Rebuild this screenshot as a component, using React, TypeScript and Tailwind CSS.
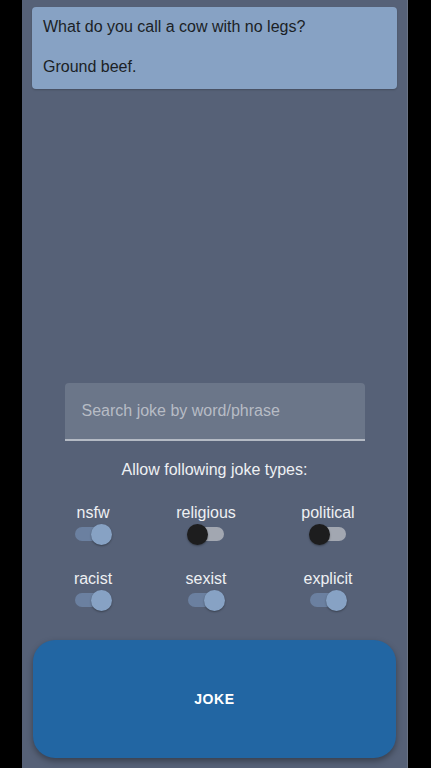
import React from "react";

function Toggle({ on }: { on: boolean }) {
  return (
    <div className="relative h-[20px] w-[38px] flex items-center">
      <div
        className={
          on
            ? "h-[14px] w-[36px] ml-[1px] rounded-full bg-[#6b80a0]"
            : "h-[14px] w-[36px] ml-[1px] rounded-full bg-[#a2a7b1]"
        }
      />
      <div
        className={
          on
            ? "absolute right-0 top-0 h-[21px] w-[21px] rounded-full bg-[#87a2c4] shadow-[0_1px_2px_rgba(0,0,0,0.35)]"
            : "absolute left-0 top-0 h-[21px] w-[21px] rounded-full bg-[#1d1d1e] shadow-[0_1px_2px_rgba(0,0,0,0.35)]"
        }
      />
    </div>
  );
}

function Cell({ label, on, w }: { label: string; on: boolean; w: string }) {
  return (
    <div className={"flex flex-col items-center " + w}>
      <div className="text-[16px] leading-[20px] text-[#eef0f3]">{label}</div>
      <div className="mt-[1px]">
        <Toggle on={on} />
      </div>
    </div>
  );
}

export default function App() {
  return (
    <div
      className="flex h-[768px] w-[431px] bg-black"
      style={{ fontFamily: '"Liberation Sans", Arial, sans-serif' }}
    >
      <div className="ml-[22px] flex h-full w-[386px] flex-col border-r border-[#6a7384] bg-[#566177]">
        <div className="mx-[10px] mt-[7px] rounded-[4px] bg-[#87a2c4] px-[11px] pt-[10px] pb-[12px] text-[16px] leading-[20px] text-[#1b1f26] shadow-[0_1px_2px_rgba(0,0,0,0.2)]">
          <div>What do you call a cow with no legs?</div>
          <div className="h-[20px]" />
          <div>Ground beef.</div>
        </div>

        <div className="flex-1" />

        <div className="mx-auto flex h-[58px] w-[300px] items-center rounded-t-[4px] border-b-[2px] border-[#b4bac4] bg-[#6b7689] px-[17px]">
          <span className="text-[16px] text-[#b7bcc5]">Search joke by word/phrase</span>
        </div>

        <div className="mt-[19px] text-center text-[16px] leading-[20px] text-[#eef0f3]">
          Allow following joke types:
        </div>

        <div className="mt-[23px] flex flex-col gap-[25px]">
          <div className="flex">
            <Cell label="nsfw" on={true} w="ml-[31px] w-[80px]" />
            <Cell label="religious" on={false} w="ml-[33px] w-[80px]" />
            <Cell label="political" on={false} w="ml-[42px] w-[80px]" />
          </div>
          <div className="flex">
            <Cell label="racist" on={true} w="ml-[31px] w-[80px]" />
            <Cell label="sexist" on={true} w="ml-[33px] w-[80px]" />
            <Cell label="explicit" on={true} w="ml-[42px] w-[80px]" />
          </div>
        </div>

        <button className="mx-[11px] mt-[30px] mb-[10px] flex h-[118px] items-center justify-center rounded-[22px] bg-[#2266a3] shadow-[0_3px_6px_rgba(0,0,0,0.35)]">
          <span className="text-[14px] font-bold tracking-[0.6px] text-white">JOKE</span>
        </button>
      </div>
    </div>
  );
}
